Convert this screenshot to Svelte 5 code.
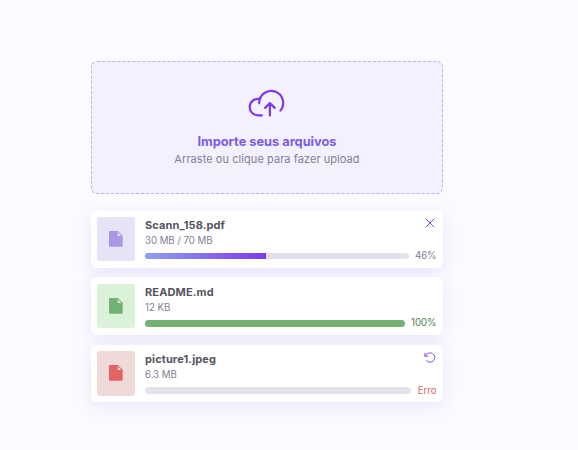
<script>
  const files = [
    { name: 'Scann_158.pdf', size: '30 MB / 70 MB', label: '46%', progress: 46, state: 'loading' },
    { name: 'README.md', size: '12 KB', label: '100%', progress: 100, state: 'done' },
    { name: 'picture1.jpeg', size: '6.3 MB', label: 'Erro', progress: 0, state: 'error' }
  ];
</script>

<main>
  <section class="drop">
    <svg class="cloud" width="38" height="30" viewBox="0 0 38 30" fill="none" stroke="#7c3aed" stroke-width="2.2" stroke-linecap="round" stroke-linejoin="round">
      <path d="M13.8 27.3H10.3a8.2 8.2 0 1 1 1.4-16.2" />
      <path d="M11.2 15.3A12 12 0 1 1 32.4 22.6" />
      <path d="M21.9 27.6V15.2M17.1 19.9l4.8-4.8 4.8 4.8" />
    </svg>
    <h1>Importe seus arquivos</h1>
    <p>Arraste ou clique para fazer upload</p>
  </section>

  <ul>
    {#each files as file}
      <li class={file.state}>
        <div class="tile">
          <svg width="14" height="16" viewBox="0 0 14 16">
            <path fill="currentColor" fill-rule="evenodd" d="M.8 0H8.9l4.8 4.8v10.1c0 .5-.3.8-.8.8H.8C.3 15.7 0 15.4 0 14.9V.8C0 .3.3 0 .8 0ZM8.7 1.2V5H12.5Z" />
          </svg>
        </div>
        <div class="info">
          <strong>{file.name}</strong>
          <span class="size">{file.size}</span>
          <div class="row">
            <div class="track"><div class="bar" style="width: {file.progress}%"></div></div>
            <span class="label">{file.label}</span>
          </div>
        </div>
        {#if file.state === 'loading'}
          <svg class="action" width="12" height="12" viewBox="0 0 12 12" fill="none" stroke="#7c3aed" stroke-width=".9" stroke-linecap="round">
            <path d="M2 2l8 8M10 2l-8 8" />
          </svg>
        {:else if file.state === 'error'}
          <svg class="action" width="12" height="12" viewBox="0 0 12 12" fill="none" stroke="#7c3aed" stroke-width=".9" stroke-linecap="round" stroke-linejoin="round">
            <path d="M.9 1.2V4.2H3.9M1.1 4C2.1 1.9 4 .9 6.2.9A4.7 4.7 0 1 1 2.6 8.7" />
          </svg>
        {/if}
      </li>
    {/each}
  </ul>
</main>

<style>
  :global(body) {
    background: #fbfaff;
    font-family: Inter, sans-serif;
  }
  main {
    width: 352px;
    padding: 61px 0 32px 91px;
  }
  .drop {
    box-sizing: border-box;
    height: 133px;
    display: flex;
    flex-direction: column;
    align-items: center;
    padding-top: 26px;
    border: 1px dashed #bcb0f0;
    border-radius: 6.4px;
    background: #f3f0ff;
  }
  .cloud {
    flex: none;
  }
  h1 {
    margin: 15px 0 0;
    font-size: 12.8px;
    line-height: 18px;
    font-weight: 700;
    color: #7c5ce6;
  }
  p {
    margin: 0;
    font-size: 11px;
    letter-spacing: 0.06px;
    line-height: 16px;
    color: #857e95;
  }
  ul {
    list-style: none;
    margin: 16px 0 0;
    padding: 0;
    display: flex;
    flex-direction: column;
    gap: 9.7px;
  }
  li {
    box-sizing: border-box;
    position: relative;
    height: 57.6px;
    display: flex;
    padding: 6.5px 6.4px 6.5px 6px;
    border-radius: 6.4px;
    background: #fff;
    box-shadow: 0 4px 16px rgba(87, 51, 237, 0.1);
  }
  .tile {
    width: 38px;
    flex: none;
    display: flex;
    align-items: center;
    justify-content: center;
    border-radius: 3px;
    background: #e7e3f6;
    color: #ac96e4;
  }
  .done .tile {
    background: #daf2d9;
    color: #73b172;
  }
  .error .tile {
    background: #f0d9d9;
    color: #e36363;
  }
  .info {
    flex: 1;
    min-width: 0;
    margin-left: 10px;
    display: flex;
    flex-direction: column;
  }
  strong {
    font-size: 11px;
    letter-spacing: 0.12px;
    line-height: 17px;
    font-weight: 700;
    color: #575361;
  }
  .size {
    font-size: 9.7px;
    letter-spacing: -0.05px;
    line-height: 14.8px;
    color: #857e95;
  }
  .row {
    display: flex;
    align-items: center;
    gap: 6.4px;
    height: 14px;
    margin-top: 0.8px;
  }
  .track {
    flex: 1;
    height: 6.4px;
    border-radius: 4px;
    background: #e3e3ed;
    overflow: hidden;
  }
  .bar {
    height: 100%;
    background: linear-gradient(90deg, #8f9ff0, #7c3aed);
  }
  .done .bar {
    background: #73b172;
  }
  .label {
    font-size: 9.7px;
    letter-spacing: -0.03px;
    line-height: 14px;
    color: #857e95;
  }
  .done .label {
    color: #4f7f4e;
  }
  .error .label {
    color: #e36363;
  }
  .action {
    position: absolute;
    top: 7px;
    right: 7px;
  }
</style>
